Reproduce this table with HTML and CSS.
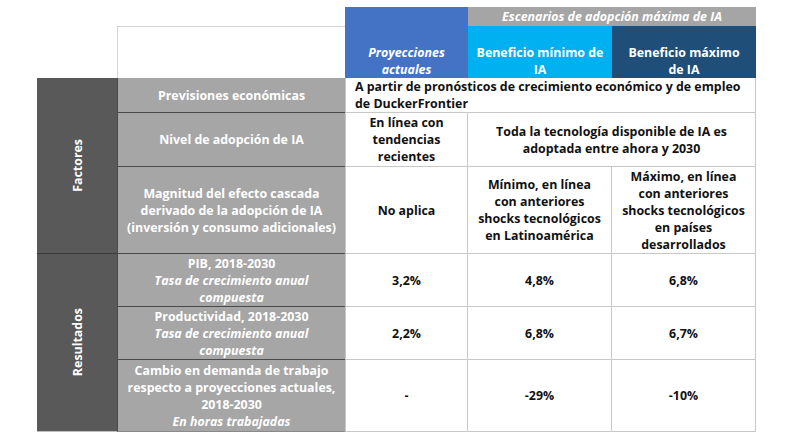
FILE: index.html
```html
<!DOCTYPE html>
<html lang="es">
<head>
<meta charset="utf-8">
<link rel="stylesheet" href="styles.css">
</head>
<body>
<div class="grid">
  <div class="corner"></div>
  <div class="h-proj"><span>Proyecciones<br>actuales</span></div>
  <div class="h-scen"><span>Escenarios de adopción máxima de IA</span></div>
  <div class="h-min"><span>Beneficio mínimo de<br>IA</span></div>
  <div class="h-max"><span>Beneficio máximo<br>de IA</span></div>

  <div class="side side-f"><span class="vtext">Factores</span></div>
  <div class="side side-r"><span class="vtext">Resultados</span></div>

  <div class="lab r3"><span>Previsiones económicas</span></div>
  <div class="cell wide3 r3 left"><span>A partir de pronósticos de crecimiento económico y de empleo<br>de DuckerFrontier</span></div>

  <div class="lab r4"><span>Nivel de adopción de IA</span></div>
  <div class="cell c3 r4"><span>En línea con<br>tendencias<br>recientes</span></div>
  <div class="cell wide2 r4"><span>Toda la tecnología disponible de IA es<br>adoptada entre ahora y 2030</span></div>

  <div class="lab r5"><span>Magnitud del efecto cascada<br>derivado de la adopción de IA<br>(inversión y consumo adicionales)</span></div>
  <div class="cell c3 r5"><span>No aplica</span></div>
  <div class="cell c4 r5"><span>Mínimo, en línea<br>con anteriores<br>shocks tecnológicos<br>en Latinoamérica</span></div>
  <div class="cell c5 r5"><span>Máximo, en línea<br>con anteriores<br>shocks tecnológicos<br>en países<br>desarrollados</span></div>

  <div class="lab r6"><span>PIB, 2018-2030<br><em>Tasa de crecimiento anual<br>compuesta</em></span></div>
  <div class="cell c3 r6"><span>3,2%</span></div>
  <div class="cell c4 r6"><span>4,8%</span></div>
  <div class="cell c5 r6"><span>6,8%</span></div>

  <div class="lab r7"><span>Productividad, 2018-2030<br><em>Tasa de crecimiento anual<br>compuesta</em></span></div>
  <div class="cell c3 r7"><span>2,2%</span></div>
  <div class="cell c4 r7"><span>6,8%</span></div>
  <div class="cell c5 r7"><span>6,7%</span></div>

  <div class="lab r8 last"><span>Cambio en demanda de trabajo<br>respecto a proyecciones actuales,<br>2018-2030<br><em>En horas trabajadas</em></span></div>
  <div class="cell c3 r8"><span>-</span></div>
  <div class="cell c4 r8"><span>-29%</span></div>
  <div class="cell c5 r8"><span>-10%</span></div>
</div>
</body>
</html>
```

FILE: styles.css
```css
html, body {
  margin: 0;
  padding: 0;
  background: #ffffff;
}

body {
  font-family: "Open Sans", "Noto Sans", sans-serif;
  font-weight: 700;
  font-size: 12.4px;
  line-height: 17px;
  color: #111111;
}

.grid {
  display: grid;
  grid-template-columns: 80px 228px 123px 144px 144px;
  grid-template-rows: 19px 52px 35px 54px 87px 53px 53px 72px;
  margin: 7px 0 0 37px;
  width: 719px;
}

.grid > div {
  box-sizing: border-box;
  display: flex;
  align-items: center;
  justify-content: center;
  text-align: center;
  white-space: nowrap;
}

em {
  font-style: italic;
}

.corner {
  grid-column: 2;
  grid-row: 2;
  border-top: 1px solid #d4d4d4;
  border-left: 1px solid #d4d4d4;
}

.h-proj {
  grid-column: 3;
  grid-row: 1 / 3;
  background: #4472c4;
  color: #ffffff;
  font-style: italic;
  align-items: flex-end !important;
}

.h-scen {
  grid-column: 4 / 6;
  grid-row: 1;
  background: #a5a5a5;
  color: #ffffff;
  font-style: italic;
}

.h-min {
  grid-column: 4;
  grid-row: 2;
  background: #00b0f0;
  color: #ffffff;
  align-items: flex-end !important;
}

.h-max {
  grid-column: 5;
  grid-row: 2;
  background: #1f4e79;
  color: #ffffff;
  align-items: flex-end !important;
}

.side {
  grid-column: 1;
  background: #595959;
  color: #ffffff;
  border-bottom: 1px solid #3a3a3a;
}

.side-f {
  grid-row: 3 / 6;
}

.side-r {
  grid-row: 6 / 9;
  border-bottom: 1px solid #bdbdbd;
}

.vtext {
  writing-mode: vertical-rl;
  transform: rotate(180deg);
}

.lab {
  grid-column: 2;
  background: #a6a6a6;
  color: #ffffff;
  border-left: 1px solid #4a4a4a;
  border-bottom: 1px solid #4a4a4a;
}

.lab.last {
  border-bottom: 1px solid #8a8a8a;
}

.r3 { grid-row: 3; }
.r4 { grid-row: 4; }
.r5 { grid-row: 5; }
.r6 { grid-row: 6; }
.r7 { grid-row: 7; }
.r8 { grid-row: 8; }

.c3 { grid-column: 3; }
.c4 { grid-column: 4; }
.c5 { grid-column: 5; }
.wide3 { grid-column: 3 / 6; }
.wide2 { grid-column: 4 / 6; }

.cell {
  background: #ffffff;
  border-right: 1px solid #c8c8c8;
  border-bottom: 1px solid #c8c8c8;
  color: #111111;
}

.cell.c3,
.cell.wide3 {
  border-left: 1px solid #c8c8c8;
}

.cell.left {
  justify-content: flex-start !important;
  text-align: left !important;
  padding-left: 9px;
}
```
